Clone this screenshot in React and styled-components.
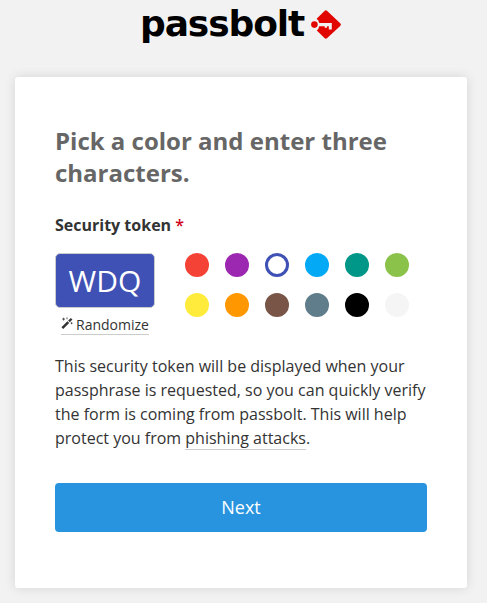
import React, { useState } from 'react'
import styled, { createGlobalStyle } from 'styled-components'

const colors = [
  '#f44336', '#9c27b0', '#3f51b5', '#03a9f4', '#009688', '#8bc34a',
  '#ffeb3b', '#ff9800', '#795548', '#607d8b', '#000000', '#f5f5f5',
]

export default function App() {
  const [token, setToken] = useState('WDQ')
  const [color, setColor] = useState('#3f51b5')

  const randomize = () => {
    const letters = 'ABCDEFGHIJKLMNOPQRSTUVWXYZ'
    const pick = (list) => list[Math.floor(Math.random() * list.length)]
    setToken(pick(letters) + pick(letters) + pick(letters))
    setColor(pick(colors))
  }

  return (
    <>
      <GlobalStyle />
      <Page>
        <Logo>
          <Wordmark>passbolt</Wordmark>
          <KeyMark />
        </Logo>
        <Card>
          <Title>Pick a color and enter three characters.</Title>
          <Label htmlFor="token">Security token <Required>*</Required></Label>
          <TokenRow>
            <TokenColumn>
              <TokenInput
                id="token"
                maxLength={3}
                value={token}
                $color={color}
                onChange={(e) => setToken(e.target.value)}
              />
              <Randomize type="button" onClick={randomize}>
                <Wand />
                <span>Randomize</span>
              </Randomize>
            </TokenColumn>
            <Palette>
              {colors.map((c) => (
                <Swatch
                  key={c}
                  type="button"
                  aria-label={c}
                  $color={c}
                  $selected={c === color}
                  onClick={() => setColor(c)}
                />
              ))}
            </Palette>
          </TokenRow>
          <Help>
            This security token will be displayed when your passphrase is
            requested, so you can quickly verify the form is coming from
            passbolt. This will help protect you from <HelpLink href="#">phishing attacks</HelpLink>.
          </Help>
          <NextButton type="button">Next</NextButton>
        </Card>
      </Page>
    </>
  )
}

function KeyMark() {
  return (
    <svg width="32" height="31" viewBox="0 0 32 31">
      <path
        fill="#e10600"
        d="M14.500 1.900a1.900 1.900 0 0 1 2.700 0L30.200 14.300a1.800 1.800 0 0 1 0 2.700L17.200 29.100a1.900 1.900 0 0 1-2.700 0L6.800 21.400a6.500 6.500 0 0 0 2.400-4.100h5.500v1.500h2.300v-1.500h1.800v3.200h3v-6.500H9.200a6.500 6.500 0 0 0-2.600-4.200z"
      />
      <circle cx="4.400" cy="15.600" r="3.300" fill="#e10600" />
    </svg>
  )
}

function Wand() {
  return (
    <svg width="12" height="13" viewBox="0 0 12 13" stroke="#333">
      <path d="M1.300 12.100L7.300 6.100" strokeWidth="2.500" />
      <path d="M8 5.400L10.600 2.800" strokeWidth="2.300" />
      <path d="M2.600 1.700v2.800M1.200 3.100h2.800M6 1.400v1.900M10.600 6.300v1.900M9.700 7.200h1.800" strokeWidth=".8" />
    </svg>
  )
}

// STYLES

const GlobalStyle = createGlobalStyle`
  * {
    box-sizing: border-box;
  }

  body {
    margin: 0;
    background: #f2f2f2;
    color: #333;
    font-family: 'Open Sans', sans-serif;
    font-size: 16px;
  }

  button, input {
    font-family: inherit;
  }
`

const Page = styled.div`
  min-height: 603px;
  padding: 0 20px 15px 15px;
`

const Logo = styled.div`
  display: flex;
  height: 77px;
  padding: 9px 0 0 125px;
`

const Wordmark = styled.div`
  width: 170px;
  height: 36px;
  color: #000;
  font-family: 'DejaVu Sans', sans-serif;
  font-size: 36px;
  font-weight: 700;
  line-height: 30px;
  letter-spacing: -1.1px;
`

const Card = styled.div`
  display: flex;
  flex-direction: column;
  height: 511px;
  padding: 48px 40px 0;
  background: #fff;
  border-radius: 3px;
  box-shadow: 0 0 12px rgba(0, 0, 0, 0.12);
`

const Title = styled.h1`
  margin: 0;
  color: #666;
  font-size: 24px;
  font-weight: 700;
  line-height: 32px;
`

const Label = styled.label`
  margin-top: 24px;
  font-weight: 700;
  line-height: 24px;
`

const Required = styled.span`
  color: #d0021b;
  font-weight: 600;
`

const TokenRow = styled.div`
  display: flex;
  gap: 30px;
  margin-top: 16px;
`

const TokenColumn = styled.div`
  display: flex;
  flex-direction: column;
  align-items: center;
  width: 100px;
`

const TokenInput = styled.input`
  width: 100px;
  height: 55px;
  padding: 0;
  border: 1px solid #ccc;
  border-radius: 5px;
  background: ${(props) => props.$color};
  color: ${(props) => (props.$color === '#f5f5f5' ? '#333' : '#fff')};
  font-size: 30px;
  text-align: center;
`

const Randomize = styled.button`
  display: flex;
  gap: 3px;
  margin-top: 8px;
  padding: 0;
  border: 0;
  border-bottom: 1px solid #ccc;
  background: none;
  color: #333;
  font-size: 14px;
  line-height: 18px;
  cursor: pointer;
`

const Palette = styled.div`
  display: grid;
  grid-template-columns: repeat(6, 24px);
  gap: 16px;
  align-content: start;
`

const Swatch = styled.button`
  width: 24px;
  height: 24px;
  padding: 0;
  border: 3px solid ${(props) => props.$color};
  border-radius: 50%;
  background: ${(props) => (props.$selected ? '#fff' : props.$color)};
  cursor: pointer;
`

const Help = styled.p`
  margin: 19px 0 0;
  line-height: 24px;
`

const HelpLink = styled.a`
  border-bottom: 1px solid #ccc;
  color: inherit;
  text-decoration: none;
`

const NextButton = styled.button`
  height: 49px;
  margin-top: 33px;
  padding: 0 0 2px;
  border: 0;
  border-radius: 4px;
  background: #2894df;
  color: #fff;
  font-size: 18px;
  cursor: pointer;
`
